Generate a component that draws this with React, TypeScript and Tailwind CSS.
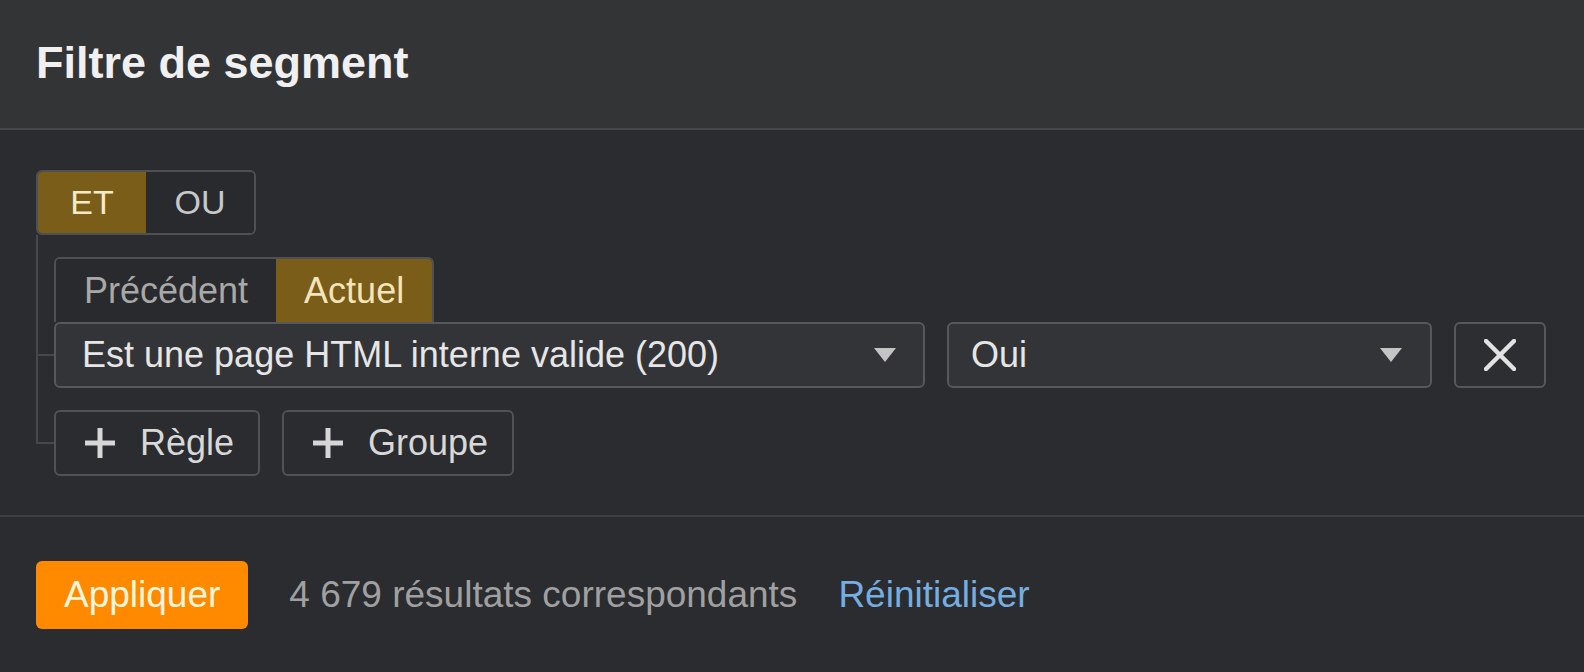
import { useState } from "react";

type Logic = "ET" | "OU";
type Period = "Précédent" | "Actuel";

const Caret = () => (
  <svg width="22" height="14" viewBox="0 0 22 14" className="shrink-0">
    <path d="M0 0 L22 0 L11 14 Z" fill="#c4c4c4" />
  </svg>
);

const Plus = () => (
  <svg width="32" height="32" viewBox="0 0 32 32" className="shrink-0">
    <path d="M16 1 V31 M1 16 H31" stroke="#d6d6d6" strokeWidth="5" />
  </svg>
);

const Cross = () => (
  <svg width="32" height="32" viewBox="0 0 32 32">
    <path d="M2 2 L30 30 M30 2 L2 30" stroke="#e2e2e2" strokeWidth="4.5" strokeLinecap="round" />
  </svg>
);

export default function App() {
  const [logic, setLogic] = useState<Logic>("ET");
  const [period, setPeriod] = useState<Period>("Actuel");

  const tick =
    "relative before:content-[''] before:absolute before:-left-[18px] before:top-1/2 before:-translate-y-1/2 before:w-[18px] before:h-[2px] before:bg-[#46484b]";

  return (
    <div className="w-full h-[672px] flex flex-col bg-[#2a2c2f] font-['Liberation_Sans',Arial,sans-serif] text-[36px] text-[#e6e6e6]">
      <div className="h-[130px] shrink-0 flex items-center px-[36px] pb-[4px] bg-[#333436] border-b-2 border-[#444649]">
        <h1 className="text-[45px] font-bold text-[#f0f0f0] leading-none">Filtre de segment</h1>
      </div>

      <div className="pt-[40px] pl-[36px] pr-[38px] pb-[39px]">
        <div className="flex w-fit h-[65px] rounded-[6px] border-2 border-[#4e5053] overflow-hidden text-[34px]">
          {(["ET", "OU"] as Logic[]).map((l) => (
            <button
              key={l}
              onClick={() => setLogic(l)}
              className={[
                "w-[108px] flex items-center justify-center",
                logic === l ? "bg-[#7a5d18] text-[#f5e9c8]" : "bg-[#282a2d] text-[#c8c8c8]",
              ].join(" ")}
            >
              {l}
            </button>
          ))}
        </div>

        <div className="relative pl-[18px]">
          <div className="absolute left-0 top-0 bottom-[32px] w-[2px] bg-[#46484b]" />

          <div className="pt-[22px]">
            <div className="flex w-fit h-[65px] rounded-t-[6px] border-2 border-b-0 border-[#4e5053] overflow-hidden">
              {(["Précédent", "Actuel"] as Period[]).map((p) => (
                <button
                  key={p}
                  onClick={() => setPeriod(p)}
                  className={[
                    "px-[28px] flex items-center",
                    period === p ? "bg-[#7a5d18] text-[#f3e4bb]" : "bg-[#282a2d] text-[#a8a8a8]",
                  ].join(" ")}
                >
                  {p}
                </button>
              ))}
            </div>
          </div>

          <div className={"flex gap-[22px] h-[66px] " + tick}>
            <div className="flex-1 flex items-center justify-between pl-[26px] pr-[27px] rounded-[6px] border-2 border-[#56585b] bg-[#333437]">
              <span>Est une page HTML interne valide (200)</span>
              <Caret />
            </div>
            <div className="w-[485px] flex items-center justify-between pl-[22px] pr-[28px] rounded-[6px] border-2 border-[#56585b] bg-[#333437]">
              <span>Oui</span>
              <Caret />
            </div>
            <button className="w-[92px] flex items-center justify-center rounded-[6px] border-2 border-[#56585b] bg-[#2c2e31]">
              <Cross />
            </button>
          </div>

          <div className={"flex gap-[22px] mt-[22px] h-[66px] " + tick}>
            <button className="flex items-center gap-[24px] pl-[28px] pr-[24px] rounded-[6px] border-2 border-[#505255] text-[#d8d8d8]">
              <Plus />
              <span>Règle</span>
            </button>
            <button className="flex items-center gap-[24px] pl-[28px] pr-[24px] rounded-[6px] border-2 border-[#505255] text-[#d8d8d8]">
              <Plus />
              <span>Groupe</span>
            </button>
          </div>
        </div>
      </div>

      <div className="flex-1 flex items-center gap-[41px] px-[36px] border-t-2 border-[#3d3f42] text-[37px]">
        <button className="h-[68px] px-[28px] rounded-[6px] bg-[#ff8a00] text-[#fff6dc]">Appliquer</button>
        <span className="text-[#a0a0a0]">4 679 résultats correspondants</span>
        <a className="text-[#76aee0] cursor-pointer">Réinitialiser</a>
      </div>
    </div>
  );
}
